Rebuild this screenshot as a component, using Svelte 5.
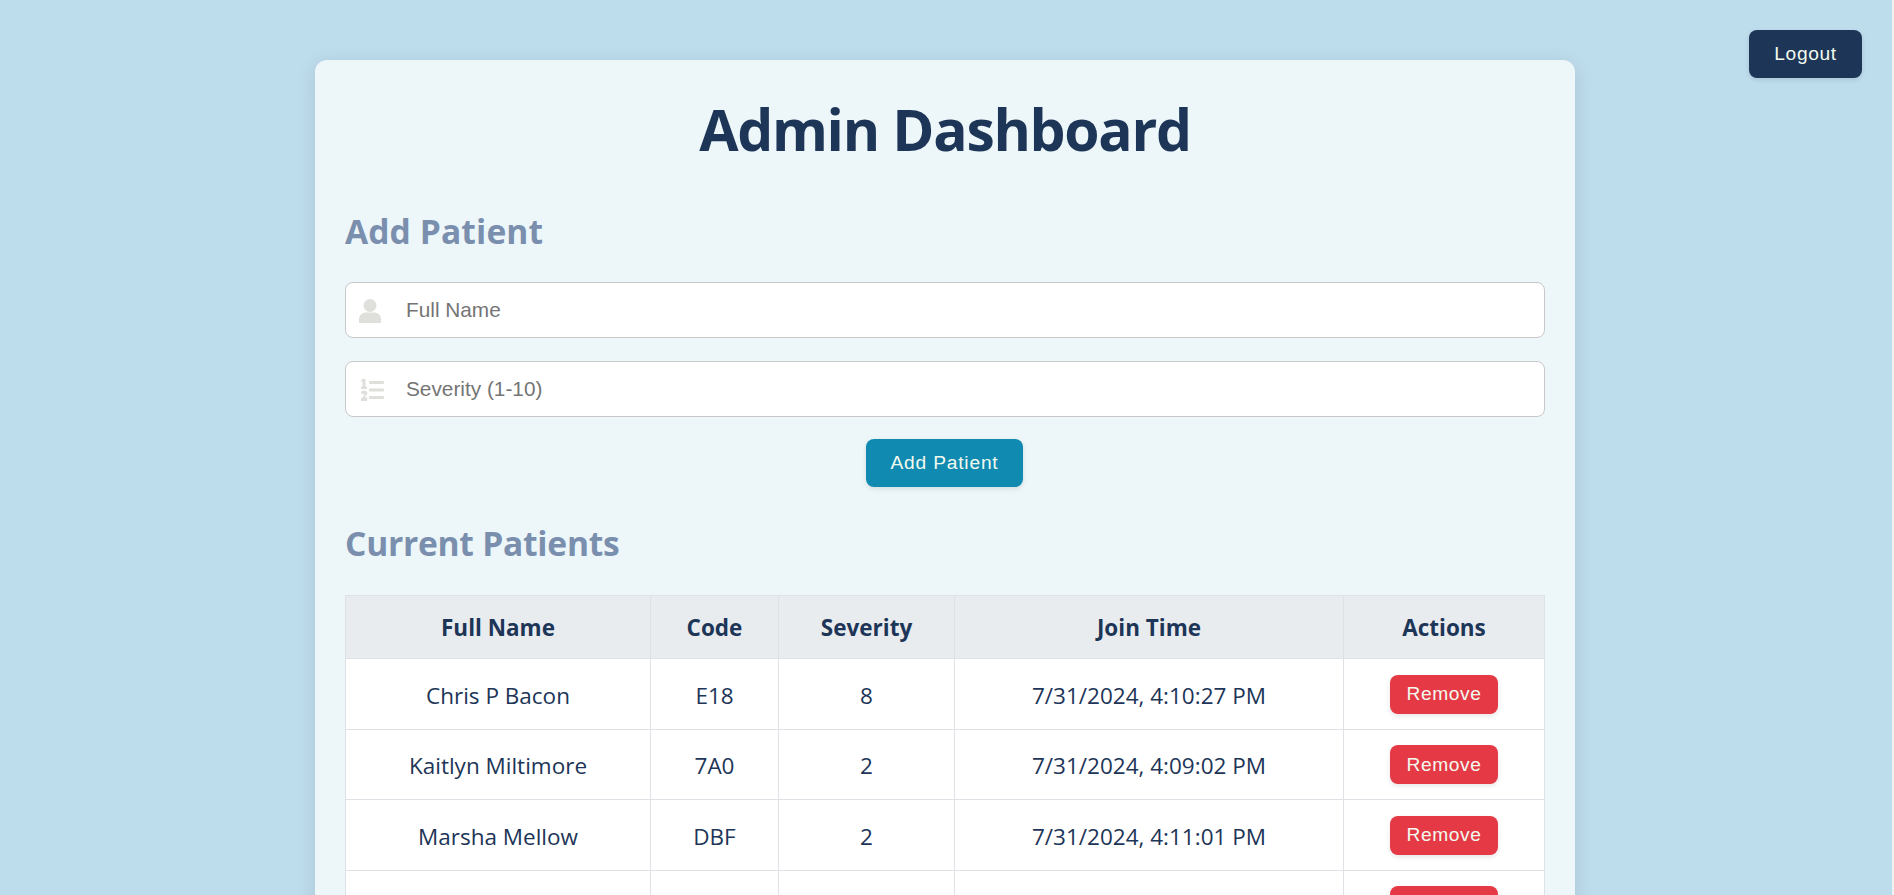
<script lang="ts">
	// the fourth row sits mostly below the fold, only its button shows
	const patients = [
		{ name: 'Chris P Bacon', code: 'E18', severity: '8', joined: '7/31/2024, 4:10:27 PM' },
		{ name: 'Kaitlyn Miltimore', code: '7A0', severity: '2', joined: '7/31/2024, 4:09:02 PM' },
		{ name: 'Marsha Mellow', code: 'DBF', severity: '2', joined: '7/31/2024, 4:11:01 PM' },
		{ name: '', code: '', severity: '', joined: '' }
	];
</script>

<div class="page">
	<button class="logout">Logout</button>

	<main class="card">
		<h1>Admin Dashboard</h1>

		<h2>Add Patient</h2>
		<form class="add-form" onsubmit={(e) => e.preventDefault()}>
			<div class="field">
				<svg class="field-icon user" viewBox="0 0 22 24" aria-hidden="true">
					<circle cx="11" cy="6.5" r="6.5" />
					<path d="M0 24v-3.5C0 16 3.5 13.5 7 13.5h8c3.500 0 7 2.500 7 7V24z" />
				</svg>
				<input type="text" placeholder="Full Name" />
			</div>
			<div class="field">
				<svg class="field-icon list" viewBox="0 0 24 22" aria-hidden="true">
					<path d="M2 0h3.500v7.500H7V10H1V7.500h1.500V3H1z" />
					<path d="M1 14c.3-1.800 1.800-2.500 3.200-2.500 1.800 0 3.100 1 3.100 2.600 0 1.700-1.300 2.700-3 4.100h3V22H1v-2.300c2.500-2.200 3.300-3.100 3.300-4.300 0-1.100-1.600-1-1.800.2z" />
					<rect x="9" y="2" width="15" height="3" rx="1" />
					<rect x="9" y="9.500" width="15" height="3" rx="1" />
					<rect x="9" y="17" width="15" height="3" rx="1" />
				</svg>
				<input type="number" placeholder="Severity (1-10)" />
			</div>
			<button class="add-btn" type="submit">Add Patient</button>
		</form>

		<h2 class="current">Current Patients</h2>
		<table>
			<thead>
				<tr>
					<th class="col-name">Full Name</th>
					<th class="col-code">Code</th>
					<th class="col-severity">Severity</th>
					<th class="col-time">Join Time</th>
					<th>Actions</th>
				</tr>
			</thead>
			<tbody>
				{#each patients as p}
					<tr>
						<td>{p.name}</td>
						<td>{p.code}</td>
						<td>{p.severity}</td>
						<td>{p.joined}</td>
						<td class="action-cell"><button class="remove">Remove</button></td>
					</tr>
				{/each}
			</tbody>
		</table>
	</main>
</div>

<style>
	:global(html), :global(body) {
		height: 100%;
		overflow: hidden;
		background: #f1f1f1;
	}

	.page {
		position: relative;
		width: 1892px;
		min-height: 895px;
		box-sizing: border-box;
		padding: 60px 2px 0 0;
		background: #bddcec;
		font-family: "Open Sans", "Noto Sans", sans-serif;
		color: #1d3557;
	}

	.logout {
		position: absolute;
		top: 30px;
		right: 30px;
		width: 113px;
		height: 48px;
		border: none;
		border-radius: 8px;
		background: #1d3557;
		color: #f1faee;
		font: 19.2px "Liberation Sans", sans-serif;
		letter-spacing: 0.6px;
		box-shadow: 0 2px 5px rgba(0, 0, 0, 0.1);
	}

	.card {
		box-sizing: border-box;
		width: 1260px;
		margin: 0 auto;
		padding: 30px;
		border-radius: 12px;
		background: #edf6f9;
		box-shadow: 0 4px 20px rgba(0, 0, 0, 0.1);
	}

	h1 {
		margin: 0 0 40px;
		font-size: 57px;
		line-height: 78px;
		letter-spacing: -1.3px;
		font-weight: 700;
		text-align: center;
		color: #1d3557;
	}

	h2 {
		margin: 0 0 28px;
		font-size: 33.6px;
		line-height: 46px;
		font-weight: 700;
		letter-spacing: 0.1px;
		color: #7a8fae;
	}

	.add-form {
		display: flex;
		flex-direction: column;
		gap: 23px;
	}

	.field {
		position: relative;
	}

	.field-icon {
		position: absolute;
		fill: #dfe0dc;
	}

	.field-icon.user {
		left: 14px;
		top: 17px;
		width: 22px;
		height: 24px;
	}

	.field-icon.list {
		left: 15px;
		top: 18px;
		width: 24px;
		height: 22px;
	}

	input {
		display: block;
		box-sizing: border-box;
		width: 100%;
		height: 56px;
		padding: 0 60px;
		border: 1px solid #c8c8c8;
		border-radius: 8px;
		background: #fff;
		font: 20.8px "Liberation Sans", sans-serif;
		outline: none;
	}

	input::placeholder {
		color: #757575;
	}

	.add-btn {
		align-self: center;
		width: 157px;
		height: 48px;
		margin: -1px 0 0 -1px;
		border: none;
		border-radius: 8px;
		background: #118ab2;
		color: #f1faee;
		font: 19.2px "Liberation Sans", sans-serif;
		letter-spacing: 0.8px;
		box-shadow: 0 2px 5px rgba(0, 0, 0, 0.1);
	}

	.current {
		margin-top: 33px;
		margin-bottom: 29px;
		letter-spacing: -0.25px;
	}

	table {
		width: 100%;
		border-collapse: collapse;
		table-layout: fixed;
		background: #fff;
	}

	th, td {
		padding: 0;
		border: 1px solid #dee2e6;
		text-align: center;
		font-size: 22.5px;
	}

	th {
		height: 61px;
		padding-top: 1px;
		background: #e9ecef;
		font-weight: 700;
		color: #1d3557;
	}

	td {
		height: 67px;
		padding-bottom: 0;
		padding-top: 2.5px;
		color: #1d3557;
	}

	td.action-cell {
		padding-top: 0;
		height: 69.5px;
	}

	.col-name { width: 304px; }
	.col-code { width: 127px; }
	.col-severity { width: 175px; }
	.col-time { width: 388px; }

	.remove {
		display: block;
		width: 108px;
		height: 39px;
		margin: 1px auto 0;
		border: none;
		border-radius: 8px;
		background: #e63946;
		color: #f1faee;
		font: 19.2px "Liberation Sans", sans-serif;
		letter-spacing: 0.6px;
		box-shadow: 0 2px 5px rgba(0, 0, 0, 0.1);
	}
</style>
